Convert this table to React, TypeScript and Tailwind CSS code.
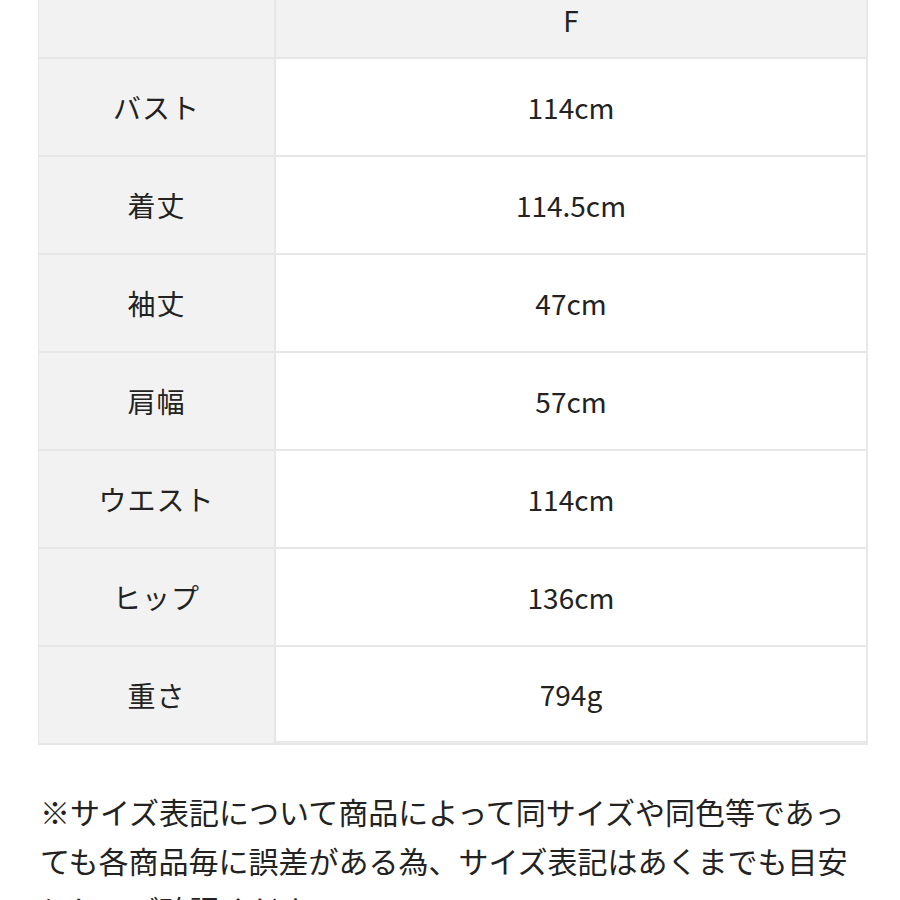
import React from 'react'

interface SizeRow {
  label: string;
  value: string;
}

const rows: SizeRow[] = [
  { label: 'バスト', value: '114cm' },
  { label: '着丈', value: '114.5cm' },
  { label: '袖丈', value: '47cm' },
  { label: '肩幅', value: '57cm' },
  { label: 'ウエスト', value: '114cm' },
  { label: 'ヒップ', value: '136cm' },
  { label: '重さ', value: '794g' },
]

const font = { fontFamily: '"Noto Sans CJK JP", "Noto Sans", sans-serif' }

const App: React.FC = () => {
  return (
    <div className="w-[900px] h-[900px] overflow-hidden bg-white text-[#222]" style={font}>
      <div className="ml-[38px] mt-[-17px] w-[830px] grid grid-cols-[238px_1fr] border-r-2 border-[#e8e8e8]">
        {/* header */}
        <div className="h-[76px] bg-[#f2f2f2] border-l border-r-2 border-b-2 border-[#e6e6e6]" />
        <div className="h-[76px] bg-[#f2f2f2] border-b-2 border-[#e6e6e6] flex items-center justify-center text-[28px]">
          F
        </div>

        {rows.map((row, i) => (
          <React.Fragment key={row.label}>
            <div className="h-[98px] bg-[#f2f2f2] border-l border-r-2 border-b-2 border-[#e6e6e6] flex items-center justify-center text-[28px] tracking-[1px]">
              {row.label}
            </div>
            <div
              className={
                i === rows.length - 1
                  ? 'h-[98px] bg-white border-b-4 border-[#e8e8e8] flex items-center justify-center text-[28px]'
                  : 'h-[98px] bg-white border-b-2 border-[#e6e6e6] flex items-center justify-center text-[28px]'
              }
            >
              {row.value}
            </div>
          </React.Fragment>
        ))}
      </div>

      <div className="ml-[40px] mt-[42px] text-[30px] leading-[49px] whitespace-nowrap">
        <p>※サイズ表記について商品によって同サイズや同色等であっ</p>
        <p>ても各商品毎に誤差がある為、サイズ表記はあくまでも目安</p>
        <p>としてご確認ください。</p>
      </div>
    </div>
  )
}

export default App
